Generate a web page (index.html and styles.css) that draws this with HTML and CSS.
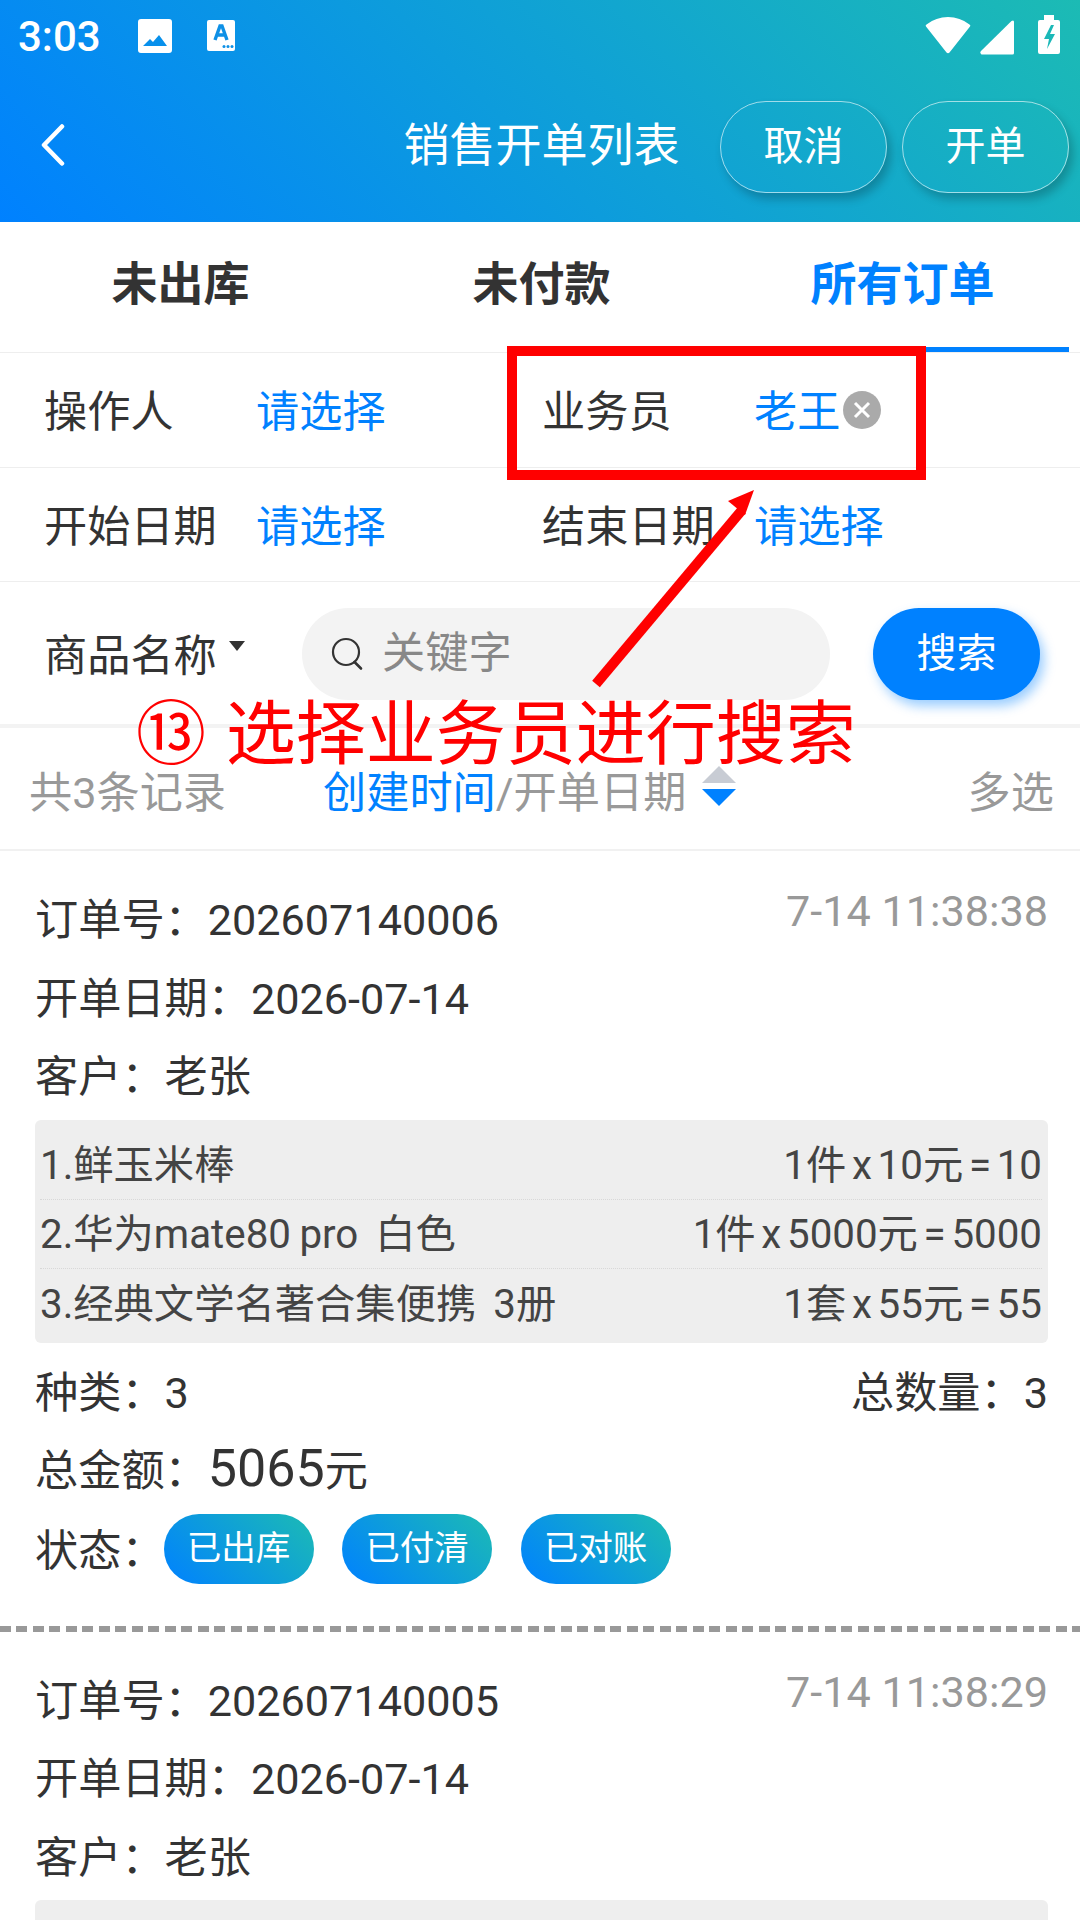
FILE: index.html
```html
<!DOCTYPE html>
<html lang="zh-CN">
<head>
<meta charset="utf-8">
<title>销售开单列表</title>
<link rel="stylesheet" href="styles.css">
</head>
<body>
<div class="page">
  <header class="header">
    <div class="statusbar">
      <span class="clock">3:03</span>
      <svg class="ic-image" width="34" height="34" viewBox="0 0 34 34"><path fill="#fff" fill-rule="evenodd" d="M3 0h28a3 3 0 0 1 3 3v28a3 3 0 0 1-3 3H3a3 3 0 0 1-3-3V3a3 3 0 0 1 3-3zM5 27h24l-8-11-6 7-3-3z"/></svg>
      <svg class="ic-a" width="28" height="31" viewBox="0 0 28 31"><rect width="28" height="31" rx="2" fill="#fff"/><path d="M8 20 L13 6 L15 6 L20 20 M10 15 H18" fill="none" stroke="#0e90e6" stroke-width="3.4"/><circle cx="17" cy="26.500" r="1.500" fill="#0e90e6"/><circle cx="21" cy="26.500" r="1.500" fill="#0e90e6"/><circle cx="25" cy="26.500" r="1.500" fill="#0e90e6"/></svg>
      <span class="status-right">
        <svg width="46" height="37" viewBox="0 0 46 37"><path fill="#fff" d="M1 9.500Q0 8.500 1.500 7.500Q11 0 23 0T44.500 7.500Q46 8.500 45 9.500L24.500 35.500Q23 37 21.500 35.500Z"/></svg>
        <svg width="34" height="35" viewBox="0 0 34 35"><path fill="#fff" d="M1 31 31.500 1Q34 -0.500 34 2V33a1.500 1.500 0 0 1-1.500 1.500H1.500Q-0.500 33 1 31z"/></svg>
        <svg class="ic-bat" width="22" height="39" viewBox="0 0 22 39"><path fill="#fff" fill-rule="evenodd" d="M6 0h10v5h4a2 2 0 0 1 2 2v30a2 2 0 0 1-2 2H2a2 2 0 0 1-2-2V7a2 2 0 0 1 2-2h4zM13 10l-7 14h5l-2 10 8-15h-5l4-9z"/></svg>
      </span>
    </div>
    <div class="nav">
      <svg class="back" width="24" height="42" viewBox="0 0 24 42"><path d="M21 2.500 3 21 21 39.500" fill="none" stroke="#fff" stroke-width="4.500" stroke-linecap="round" stroke-linejoin="round"/></svg>
      <div class="title">销售开单列表</div>
      <div class="nav-actions">
        <button class="nav-btn">取消</button>
        <button class="nav-btn">开单</button>
      </div>
    </div>
  </header>

  <nav class="tabs">
    <div class="tab">未出库</div>
    <div class="tab">未付款</div>
    <div class="tab active">所有订单</div>
  </nav>

  <section class="filter-row">
    <div class="filter"><span class="f-label">操作人</span><span class="f-value">请选择</span></div>
    <div class="filter"><span class="f-label">业务员</span><span class="f-value">老王</span>
      <svg class="clear" width="38" height="38" viewBox="0 0 38 38"><circle cx="19" cy="19" r="19" fill="#aaa"/><path d="M12 12 26 26M26 12 12 26" stroke="#fff" stroke-width="3" fill="none"/></svg>
    </div>
  </section>
  <section class="filter-row filter-row-last">
    <div class="filter"><span class="f-label">开始日期</span><span class="f-value">请选择</span></div>
    <div class="filter"><span class="f-label">结束日期</span><span class="f-value">请选择</span></div>
  </section>

  <section class="search-row">
    <span class="s-type">商品名称</span>
    <span class="caret"></span>
    <div class="s-input">
      <svg width="34" height="34" viewBox="0 0 34 34"><circle cx="15" cy="15" r="13" fill="none" stroke="#333" stroke-width="2.200"/><path d="M23.500 25 30 31.500" stroke="#333" stroke-width="2.600" stroke-linecap="round"/></svg>
      <span class="s-placeholder">关键字</span>
    </div>
    <button class="s-btn">搜索</button>
  </section>

  <section class="sort-row">
    <span class="count">共3条记录</span>
    <span class="sort-by"><span class="on">创建时间</span>/开单日期</span>
    <span class="sort-arrows"><i class="up"></i><i class="down"></i></span>
    <span class="multi">多选</span>
  </section>

  <article class="order">
    <div class="line line-top"><span>订单号：202607140006</span><span class="time">7-14 11:38:38</span></div>
    <div class="line">开单日期：2026-07-14</div>
    <div class="line">客户：老张</div>
    <div class="items">
      <div class="item"><span>1.鲜玉米棒</span><span class="calc">1件 x 10元 = 10</span></div>
      <div class="item"><span>2.华为mate80 pro&nbsp; 白色</span><span class="calc">1件 x 5000元 = 5000</span></div>
      <div class="item"><span>3.经典文学名著合集便携&nbsp; 3册</span><span class="calc">1套 x 55元 = 55</span></div>
    </div>
    <div class="line line-split"><span>种类：3</span><span>总数量：3</span></div>
    <div class="line line-total">总金额：<span class="amount">5065</span>元</div>
    <div class="line line-state">状态：<span class="tag">已出库</span><span class="tag">已付清</span><span class="tag">已对账</span></div>
  </article>

  <article class="order">
    <div class="line line-top"><span>订单号：202607140005</span><span class="time">7-14 11:38:29</span></div>
    <div class="line">开单日期：2026-07-14</div>
    <div class="line">客户：老张</div>
    <div class="items"></div>
  </article>

  <div class="mark-box"></div>
  <svg class="mark-arrow" width="180" height="200" viewBox="0 0 180 200"><path d="M6 194 152 20" stroke="#f00" stroke-width="10" fill="none"/><path d="M164 0 138 11 155 25z" fill="#f00"/></svg>
  <div class="mark-text">⑬ 选择业务员进行搜索</div>
</div>
</body>
</html>
```
FILE: styles.css
```css
* { box-sizing: border-box; }
html, body { margin: 0; padding: 0; }
body { width: 1080px; height: 1920px; overflow: hidden; background: #fff; }
.page {
  position: relative; width: 1080px; height: 1920px; overflow: hidden;
  font-family: Roboto, "Noto Sans CJK SC", sans-serif; font-size: 43.2px; color: #333;
}
button { font-family: inherit; border: 0; padding: 0; color: #fff; background: none; }

.header { height: 222px; background: linear-gradient(45deg, #0081ff, #1cbbb4); color: #fff; }
.statusbar { height: 72px; display: flex; align-items: flex-start; padding: 0 20px 0 18px; }
.clock { font-size: 42px; font-weight: 500; line-height: 30px; margin-top: 22px; width: 81px; }
.ic-image { margin: 19px 0 0 39px; }
.ic-a { margin: 20px 0 0 35px; }
.status-right { margin-left: auto; display: flex; align-items: flex-start; gap: 9px; margin-top: 17px; }
.status-right svg:nth-child(2) { margin-top: 3px; }
.ic-bat { margin: -2px 0 0 15px; }

.nav { height: 150px; display: grid; grid-template-columns: 1fr auto 1fr; align-items: center; padding: 0 11px; }
.back { margin-left: 30px; margin-top: -4px; }
.title { font-size: 46px; line-height: 60px; margin: -4px 0 0 3px; }
.nav-actions { display: flex; justify-content: flex-end; gap: 15px; }
.nav-btn {
  width: 167px; height: 92px; border-radius: 46px; font-size: 40px; padding-bottom: 8px;
  border: 1px solid rgba(255,255,255,.6); box-shadow: 4px 6px 10px rgba(0,0,0,.22);
}

.tabs { height: 130px; display: grid; grid-template-columns: repeat(3, 361px); font-size: 46px; font-weight: 700; }
.tab { display: flex; justify-content: center; align-items: center; padding-bottom: 15px; }
.tab.active { color: #0081ff; border-bottom: 5px solid #0081ff; margin-right: 14px; padding-left: 14px; padding-bottom: 10px; }

.filter-row { height: 115px; border-top: 1px solid #eee; display: grid; grid-template-columns: 498px 1fr; padding: 0 0 5px 44px; align-items: center; }
.filter-row-last { height: 114px; padding-bottom: 3px; }
.filter { display: flex; align-items: center; }
.f-label { width: 212px; }
.f-value { color: #0081ff; }
.clear { margin: 5px 0 0 3px; }

.search-row { height: 147px; border-top: 1px solid #eee; border-bottom: 4px solid #f3f3f3; display: flex; align-items: flex-start; padding-left: 44px; }
.s-type { line-height: 60px; margin-top: 45px; width: 184px; }
.caret { width: 0; height: 0; margin: 59px 0 0 1px; border: 8.500px solid transparent; border-top: 10px solid #333; border-bottom: 0; }
.s-input { width: 528px; height: 92px; margin: 26px 0 0 57px; background: #f3f3f3; border-radius: 46px; display: flex; align-items: center; padding: 0 0 10px 29px; gap: 17px; }
.s-input svg { margin-top: 10px; }
.s-placeholder { color: #888; font-size: 43.2px; }
.s-btn { width: 167px; height: 92px; margin: 26px 0 0 43px; background: #0081ff; border-radius: 46px; font-size: 40px; padding-bottom: 8px; box-shadow: 4px 6px 12px rgba(0,129,255,.4); }

.sort-row { height: 123px; border-bottom: 2px solid #f1f1f1; display: flex; align-items: center; color: #999; padding: 12px 26px 1px 29px; white-space: nowrap; line-height: 50px; }
.count { width: 195px; }
.sort-by { margin-left: 99px; }
.sort-by .on { color: #0081ff; }
.sort-arrows { display: flex; flex-direction: column; gap: 6px; margin: -16px 0 0 16px; }
.sort-arrows i { display: block; width: 0; height: 0; border-left: 17px solid transparent; border-right: 17px solid transparent; }
.sort-arrows .up { border-bottom: 17px solid #c8ccd4; }
.sort-arrows .down { border-top: 17px solid #0081ff; }
.multi { margin-left: auto; }

.order { padding: 31px 32px 0 35px; height: 780.500px; background: repeating-linear-gradient(90deg, #999 0 11px, transparent 11px 16.500px) left 775px / 100% 6px no-repeat; }
.line { height: 78.500px; line-height: 78px; white-space: nowrap; }
.line-top { display: flex; justify-content: space-between; align-items: flex-start; }
.time { font-size: 43.2px; line-height: 60px; color: #999; }
.items { margin: 2px 0 12px; height: 223px; background: #eee; border-radius: 6px; padding: 11px 6px 0 5px; }
.item { height: 69px; display: flex; justify-content: space-between; align-items: center; font-size: 40.3px; color: #444; border-bottom: 1px dotted #d8d8d8; padding-bottom: 6px; word-spacing: -1.500px; }
.item:last-child { border-bottom: 0; }
.item .calc { word-spacing: -4.300px; }
.line-split { display: flex; justify-content: space-between; height: 75px; }
.line-total { height: 79.500px; }
.amount { font-size: 52px; }
.line-state { display: flex; align-items: center; height: 80px; padding-top: 5px; }
.tag {
  width: 150px; height: 70px; border-radius: 35px; color: #fff; font-size: 34.600px; line-height: 68px; text-align: center;
  background: linear-gradient(45deg, #0081ff, #1cbbb4); margin: -5px 28.500px 0 0;
}
.tag:first-of-type { margin-left: -1px; }

.mark-box { position: absolute; left: 507px; top: 346px; width: 419px; height: 134px; border: 10px solid #f00; }
.mark-arrow { position: absolute; left: 590px; top: 490px; }
.mark-text { position: absolute; left: 136px; top: 693px; font-family: "Noto Sans CJK SC", sans-serif; font-size: 70px; line-height: 72px; color: #f00; white-space: nowrap; word-spacing: 4px; }
```
